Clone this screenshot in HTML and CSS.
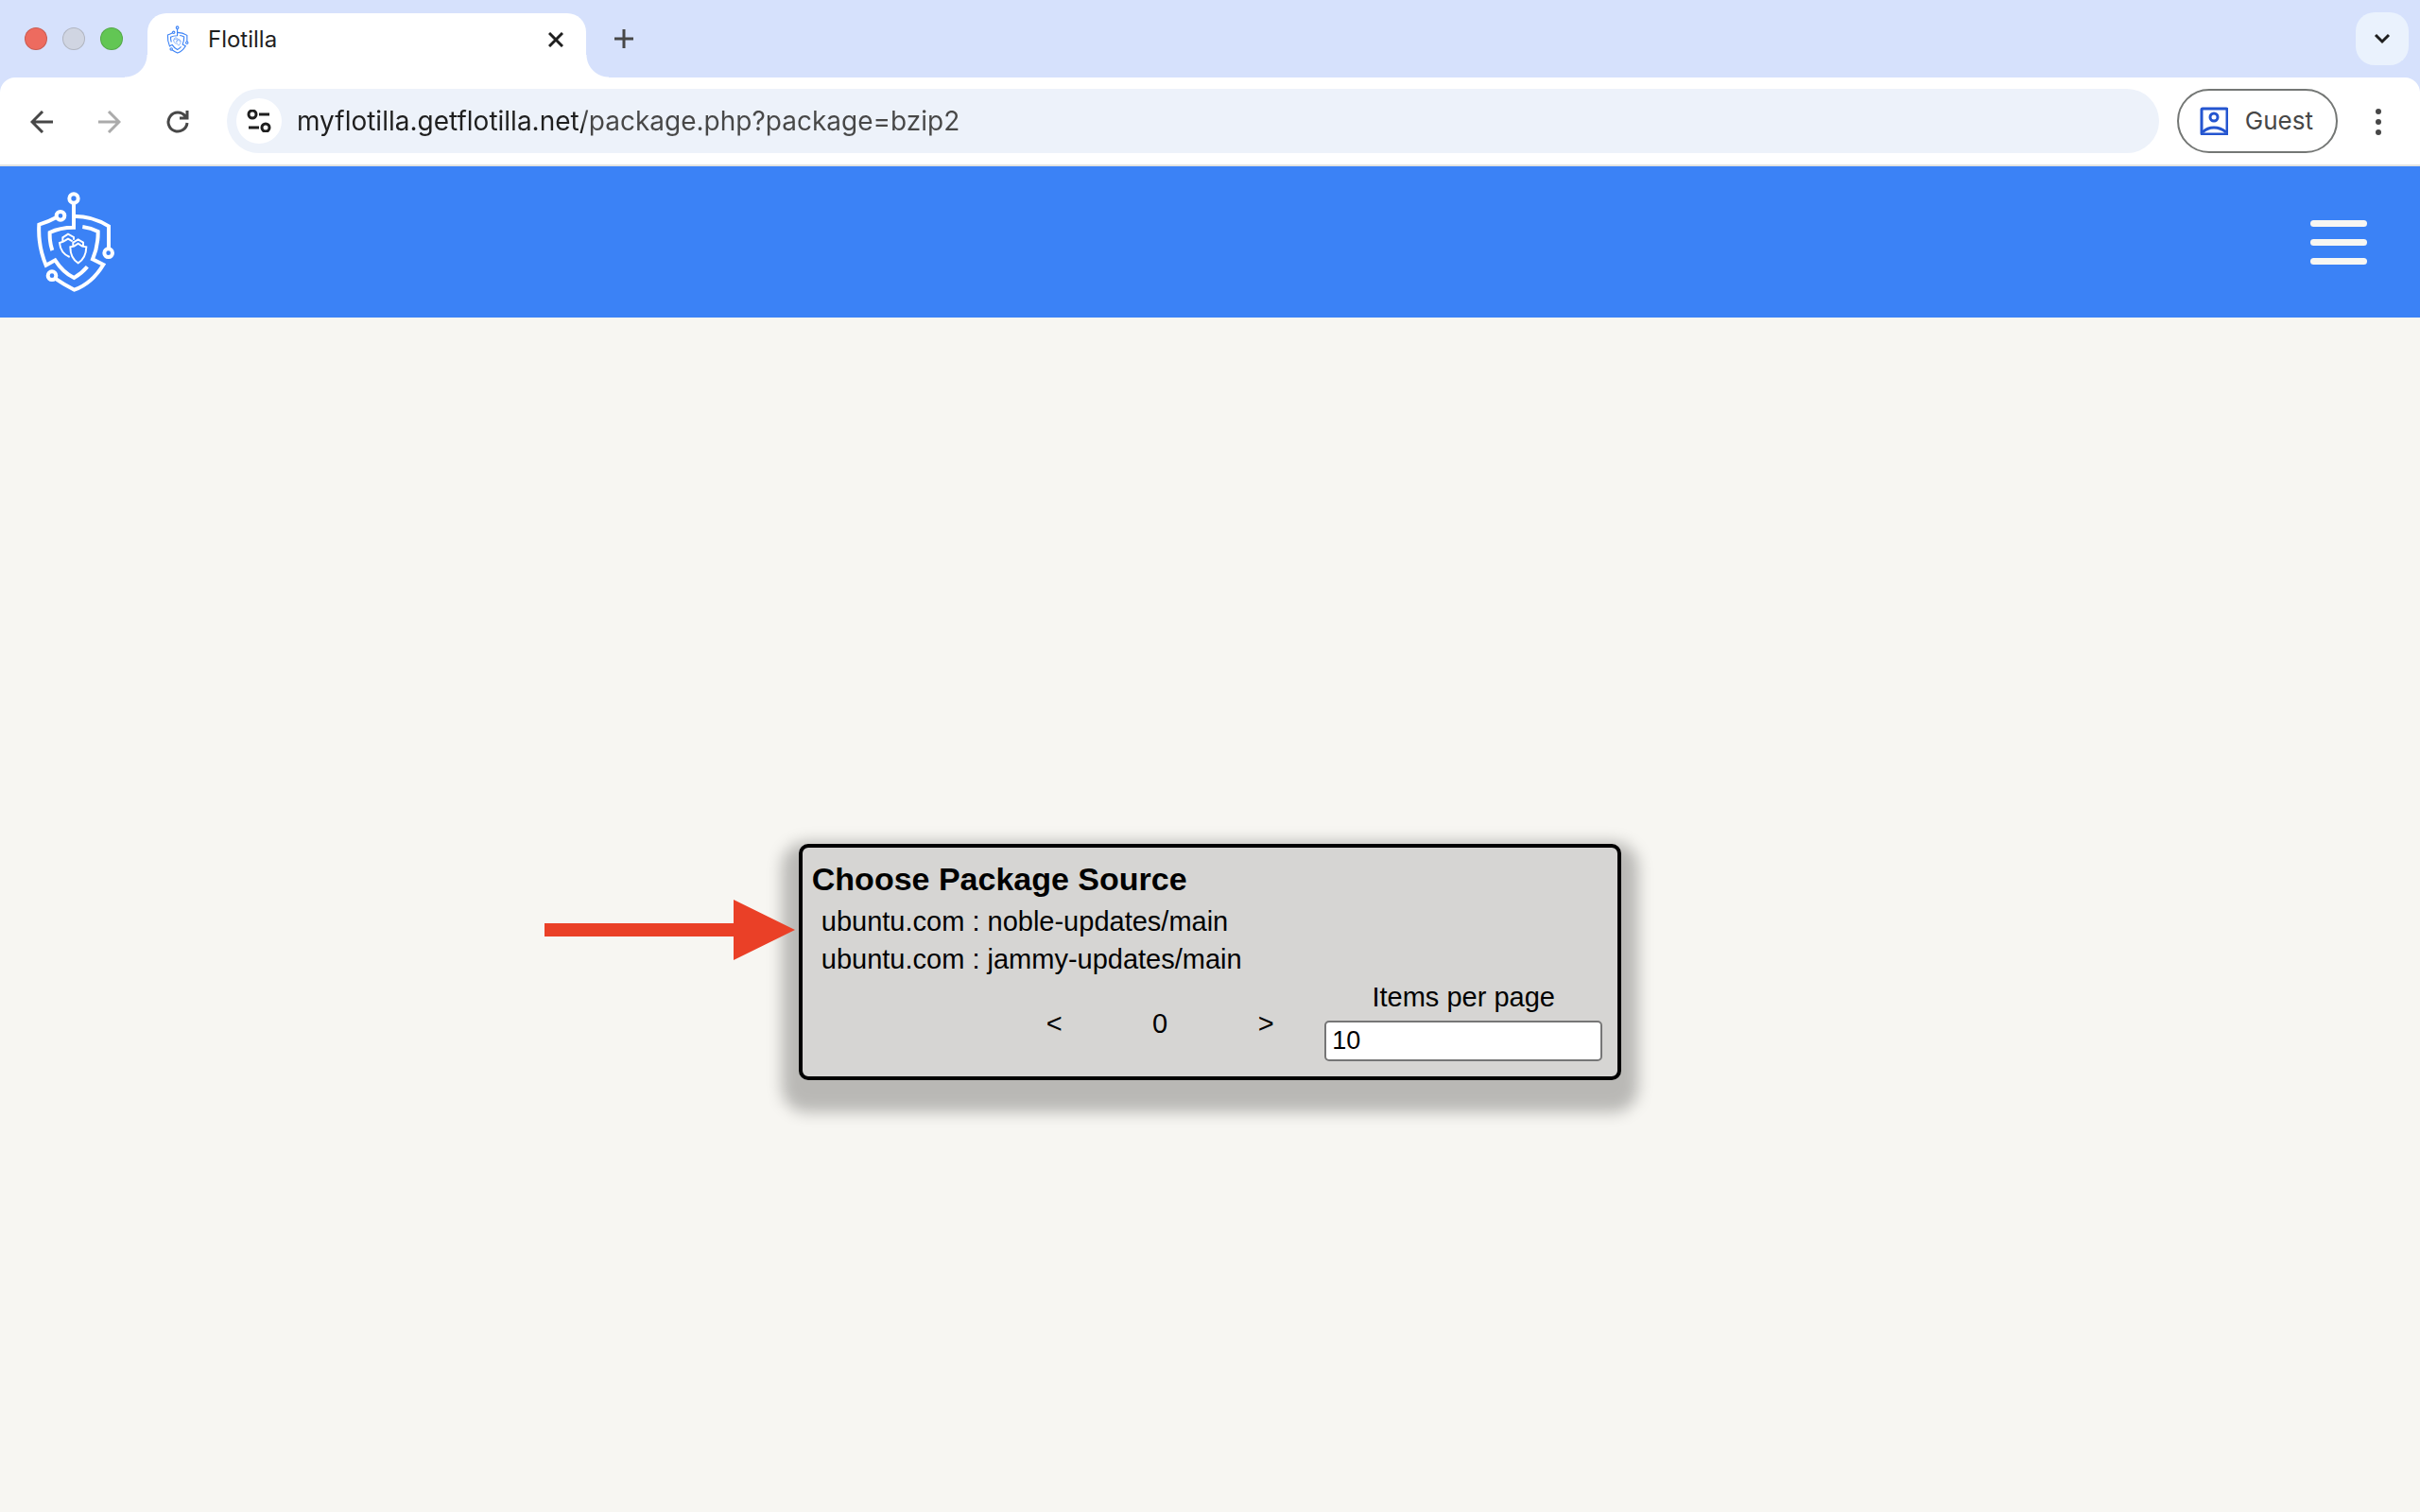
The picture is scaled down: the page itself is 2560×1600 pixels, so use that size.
FILE: index.html
```html
<!DOCTYPE html>
<html lang="en">
<head>
  <meta charset="UTF-8" />
  <meta name="viewport" content="width=device-width, initial-scale=1.0"/>
  <title>Flotilla</title>
  <link rel="stylesheet" href="styles.css">
</head>
<body>

  <svg class="sprite" aria-hidden="true">
    <symbol id="logo" viewBox="51 36 255 324">
      <g fill="none" stroke="currentColor" stroke-width="12">
        <circle cx="174" cy="60" r="14"/>
        <circle cx="132" cy="115" r="13"/>
        <circle cx="284" cy="233" r="13"/>
        <circle cx="105" cy="305" r="13"/>
        <path d="M174 75V152Q130 152 98 168Q97 200 106 225"/>
        <path d="M119 120Q94 134 64 143Q60 210 86 272L115 256Q140 295 175 312Q200 298 217 277"/>
        <path d="M174 116Q235 116 285 148V219"/>
        <path d="M202 150Q230 154 251 165Q252 210 234 253L268 270Q232 330 176 350Q140 332 115 314"/>
      </g>
      <g fill="none" stroke="currentColor" stroke-width="6">
        <path d="M163 214L175 212L188 203L201 212L214 214Q213 250 188 265Q163 250 163 214Z"/>
        <path d="M172 212V200L188 190L204 200V212"/>
        <path d="M161 246Q132 234 129 201L141 197L156 188L170 196"/>
        <path d="M139 197V184L156 173L174 183V191"/>
      </g>
    </symbol>
  </svg>

  <!-- browser window -->
  <div class="browser">
    <div class="tab-strip">
      <div class="window-buttons">
        <button class="dot red" type="button" aria-label="Close window"></button>
        <button class="dot gray" type="button" aria-label="Minimize window"></button>
        <button class="dot green" type="button" aria-label="Zoom window"></button>
      </div>
      <div class="tab">
        <svg class="favicon" aria-hidden="true"><use href="#logo"/></svg>
        <span class="tab-title">Flotilla</span>
        <button class="icon-btn" type="button" aria-label="Close tab">
          <svg width="16" height="16" viewBox="0 0 16 16"><path d="M1 1L15 15M15 1L1 15" stroke="#1f1f1f" stroke-width="3"/></svg>
        </button>
      </div>
      <button class="icon-btn new-tab" type="button" aria-label="New tab">
        <svg width="20" height="20" viewBox="0 0 20 20"><path d="M10 0V20M0 10H20" stroke="#474747" stroke-width="3"/></svg>
      </button>
      <button class="icon-btn tab-search" type="button" aria-label="Search tabs">
        <svg width="18" height="12" viewBox="0 0 18 12"><path d="M2 2L9 9L16 2" fill="none" stroke="#1f1f1f" stroke-width="3"/></svg>
      </button>
    </div>

    <div class="toolbar">
      <div class="nav-buttons">
        <button class="icon-btn" type="button" aria-label="Back">
          <svg width="24" height="24" viewBox="0 0 24 24"><path d="M24 12H2M13 1L2 12L13 23" fill="none" stroke="#474747" stroke-width="3"/></svg>
        </button>
        <button class="icon-btn" type="button" aria-label="Forward">
          <svg width="24" height="24" viewBox="0 0 24 24"><path d="M0 12H22M11 1L22 12L11 23" fill="none" stroke="#ababab" stroke-width="3"/></svg>
        </button>
        <button class="icon-btn" type="button" aria-label="Reload">
          <svg width="24" height="24" viewBox="0 0 24 24"><path d="M22 13A10 10 0 1 1 20 6L21 8M14 8H22V0" fill="none" stroke="#474747" stroke-width="3"/></svg>
        </button>
      </div>
      <div class="address-bar">
        <button class="icon-btn site-info" type="button" aria-label="Site information">
          <svg width="26" height="24" viewBox="0 0 26 24"><g fill="none" stroke="#1f1f1f" stroke-width="3"><circle cx="6" cy="5" r="4"/><path d="M13 5H24M2 19H13"/><circle cx="20" cy="19" r="4"/></g></svg>
        </button>
        <input class="url" type="text" aria-label="Address" value="myflotilla.getflotilla.net/package.php?package=bzip2">
      </div>
      <button class="guest" type="button">
        <svg width="30" height="30" viewBox="0 0 30 30"><g fill="none" stroke="#2455d0" stroke-width="3"><rect x="2" y="2" width="27" height="27" rx="1"/><circle cx="15" cy="11" r="4"/><path d="M3 27Q8 22 15 22T28 27"/></g></svg>
        Guest
      </button>
      <button class="icon-btn" type="button" aria-label="Menu">
        <svg width="8" height="28" viewBox="0 0 8 28" fill="#474747"><circle cx="4" cy="3" r="3"/><circle cx="4" cy="14" r="3"/><circle cx="4" cy="25" r="3"/></svg>
      </button>
    </div>
  </div>

  <!-- page -->
  <header class="header">
    <a class="logo" href="index.html" aria-label="Flotilla home">
      <svg width="85" height="108" aria-hidden="true"><use href="#logo"/></svg>
    </a>
    <button class="hamburger" type="button" aria-label="Open menu">
      <span></span>
      <span></span>
      <span></span>
    </button>
  </header>

  <main>
    <section class="card">
      <h1>Choose Package Source</h1>
      <ul class="sources">
        <li><a href="#noble">ubuntu.com : noble-updates/main</a></li>
        <li><a href="#jammy">ubuntu.com : jammy-updates/main</a></li>
      </ul>
      <div class="card-footer">
        <div class="pager">
          <button type="button" aria-label="Previous page">&lt;</button>
          <span>0</span>
          <button type="button" aria-label="Next page">&gt;</button>
        </div>
        <div class="per-page">
          <label for="perPage">Items per page</label>
          <input id="perPage" type="text" value="10">
        </div>
      </div>
      <svg class="arrow" width="265" height="66" viewBox="0 0 265 66" aria-hidden="true"><path d="M0 26H200V1L265 33L200 65V40H0Z" fill="#ea4027"/></svg>
    </section>
  </main>

</body>
</html>
```
FILE: styles.css
```css
* {
  margin: 0;
  padding: 0;
  box-sizing: border-box;
}

body {
  display: flex;
  flex-direction: column;
  min-height: 100vh;
  background-color: #f7f6f2;
  font-family: "Liberation Sans", Arial, sans-serif;
  font-size: 29px;
  line-height: 40px;
  color: #000;
}

button {
  border: none;
  background: none;
  font: inherit;
  color: inherit;
  cursor: pointer;
}

svg {
  display: block;
}

.sprite {
  display: none;
}

.browser {
  background-color: #d6e1fc;
  font-family: Inter, sans-serif;
}

/* tab strip */
.tab-strip {
  display: flex;
  align-items: center;
  height: 82px;
  padding: 0 12px 0 26px;
}

.window-buttons {
  display: flex;
  gap: 16px;
  width: 130px;
}

.dot {
  width: 24px;
  height: 24px;
  border: 1px solid rgba(0, 0, 0, 0.15);
  border-radius: 50%;
}

.red {
  background-color: #ed6b5f;
}

.gray {
  background-color: #d0d5e2;
}

.green {
  background-color: #62c654;
}

.tab {
  position: relative;
  display: flex;
  align-items: center;
  align-self: flex-end;
  width: 464px;
  height: 68px;
  padding: 0 18px;
  padding-bottom: 12px;
  border-radius: 20px 20px 0 0;
  background-color: #fff;
}

/* curved feet of the active tab */
.tab::before,
.tab::after {
  content: "";
  position: absolute;
  bottom: 0;
  width: 24px;
  height: 24px;
}

.tab::before {
  right: 100%;
  background: radial-gradient(circle at 0 0, #d6e1fc 23px, #fff 24px);
}

.tab::after {
  left: 100%;
  background: radial-gradient(circle at 100% 0, #d6e1fc 23px, #fff 24px);
}

.favicon {
  width: 28px;
  height: 30px;
  color: #3b82f6;
}

.tab-title {
  flex: 1;
  margin-left: 18px;
  font-size: 24px;
  color: #1f1f1f;
}

.icon-btn {
  display: flex;
  align-items: center;
  justify-content: center;
  flex-shrink: 0;
  width: 28px;
  height: 48px;
}

.new-tab {
  margin-left: 26px;
}

.tab-search {
  width: 56px;
  height: 56px;
  margin-left: auto;
  border-radius: 20px;
  background-color: #eaf2fd;
}

/* toolbar */
.toolbar {
  display: flex;
  align-items: center;
  gap: 19px;
  height: 94px;
  padding: 0 30px;
  border-radius: 16px 16px 0 0;
  background-color: #fff;
  box-shadow: inset 0 -2px #e2e3e1;
}

.nav-buttons {
  display: flex;
  gap: 44px;
  margin-right: 19px;
}

.address-bar {
  display: flex;
  align-items: center;
  flex: 1;
  gap: 16px;
  height: 68px;
  margin-bottom: 2px;
  padding: 0 10px;
  border-radius: 34px;
  background-color: #edf2fa;
}

.site-info {
  width: 48px;
  border-radius: 50%;
  background-color: #fff;
}

/* host is darker than the path */
.url {
  flex: 1;
  height: 40px;
  border: none;
  outline: none;
  background: linear-gradient(to right, #1f1f1f 303px, #474747 303px);
  -webkit-background-clip: text;
  background-clip: text;
  font-family: Inter, sans-serif;
  font-size: 28px;
  color: #1f1f1f;
  -webkit-text-fill-color: transparent;
}

.guest {
  display: flex;
  align-items: center;
  gap: 18px;
  height: 68px;
  margin: 0 10px 2px 0;
  padding: 0 24px 0 22px;
  border: 2px solid #747775;
  border-radius: 34px;
  font-size: 26px;
  color: #474747;
}

/* site header */
.header {
  display: flex;
  align-items: center;
  justify-content: space-between;
  height: 160px;
  padding: 0 56px 0 37px;
  background-color: #3b82f6;
}

.logo {
  color: #fff;
}

.hamburger {
  display: flex;
  flex-direction: column;
  gap: 13px;
  width: 60px;
}

.hamburger span {
  width: 100%;
  height: 7px;
  border-radius: 4px;
  background-color: #f7f6f2;
}

main {
  flex: 1;
  display: flex;
  align-items: center;
  justify-content: center;
  padding-top: 100px;
}

.card {
  position: relative;
  width: 34%;
  min-width: 640px;
  padding: 12px 16px 16px 10px;
  border: 4px solid #000;
  border-radius: 10px;
  background-color: #d6d5d3;
  box-shadow: 0 16px 16px 18px rgba(0, 0, 0, 0.25);
}

.card h1 {
  margin-bottom: 4px;
  font-size: 34px;
  line-height: 42px;
}

.sources {
  padding-left: 10px;
  list-style: none;
}

.sources a {
  color: inherit;
  text-decoration: none;
}

.card-footer {
  display: flex;
  align-items: center;
  justify-content: flex-end;
  gap: 6px;
}

.pager {
  display: grid;
  grid-template-columns: repeat(3, 112px);
  padding-top: 8px;
  text-align: center;
}

.per-page {
  display: flex;
  flex-direction: column;
  width: 294px;
  text-align: center;
}

.per-page input {
  height: 43px;
  margin-top: 5px;
  padding: 0 6px;
  border: 2px solid #767676;
  border-radius: 5px;
  background-color: #fff;
  font-family: inherit;
  font-size: 27px;
}

/* pointer to the first source */
.arrow {
  position: absolute;
  top: 54px;
  right: calc(100% + 8px);
}
```
